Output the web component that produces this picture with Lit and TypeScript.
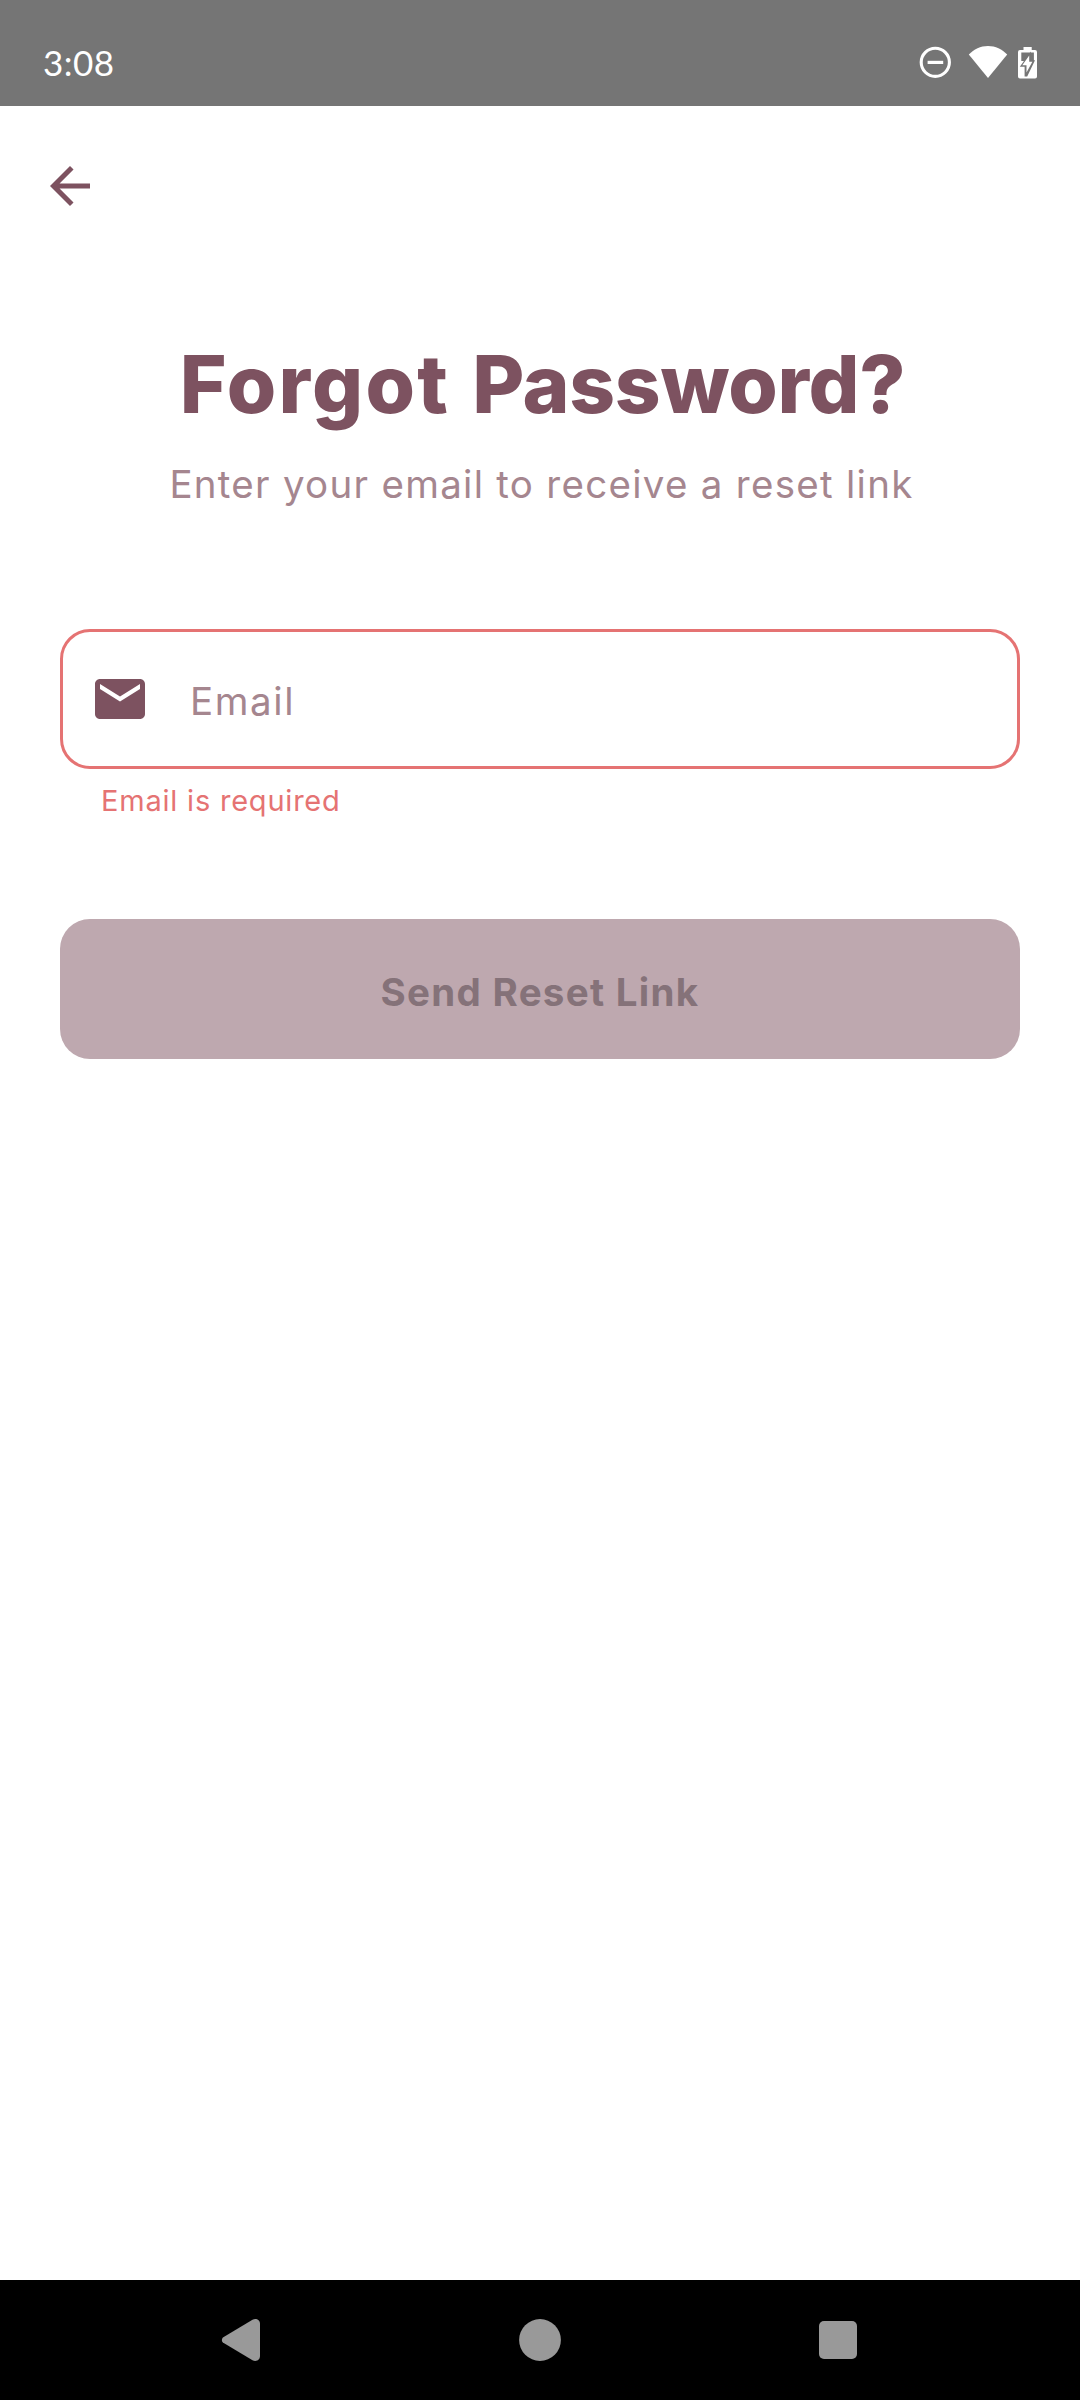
import { LitElement, html, css } from "lit";
import { customElement, property } from "lit/decorators.js";

@customElement("status-bar")
class StatusBar extends LitElement {
  @property() time = "";

  static styles = css`
    :host {
      display: flex;
      box-sizing: border-box;
      height: 106px;
      padding: 41px 40px 0 43px;
      justify-content: space-between;
      background: #757575;
      color: #fff;
    }
    .time {
      font: 400 35px/42px Lato, "Open Sans", sans-serif;
      letter-spacing: 0.5px;
    }
    .icons {
      display: flex;
      height: 42px;
    }
    svg {
      display: block;
    }
  `;

  render() {
    return html`
      <span class="time">${this.time}</span>
      <div class="icons">
        <svg width="126" height="42" viewBox="914 41 126 42">
          <circle cx="935.3" cy="62.3" r="14.1" fill="none" stroke="#fff" stroke-width="3.1" />
          <rect x="927.6" y="60.8" width="15.6" height="3.2" fill="#fff" />
          <path d="M968.8 54.6C973.9 49 980.5 45.9 988 45.9S1002.1 49 1007.2 54.6L988 78Z" fill="#fff" />
          <path d="M1023.5 47h8.2v3h3.3a2 2 0 0 1 2 2v24.6a2 2 0 0 1-2 2h-15a2 2 0 0 1-2-2V52a2 2 0 0 1 2-2h3.5z" fill="#fff" />
          <path d="M1021.3 52.5h12.6v8.5h-12.6z" fill="#757575" />
          <path d="M1030.8 51.5L1019.8 66.8h4.8v9.7h2.6L1035 60.2h-4.2z" fill="#757575" />
          <path d="M1029.2 55.5L1022.3 65.2h4.2v7.3L1032.4 61.8h-3.2z" fill="#fff" />
        </svg>
      </div>
    `;
  }
}

@customElement("navigation-bar")
class NavigationBar extends LitElement {
  static styles = css`
    :host {
      display: flex;
      height: 120px;
      padding: 0 93px;
      background: #000;
    }
    .key {
      flex: 1;
      display: flex;
      align-items: center;
      justify-content: center;
    }
    svg {
      display: block;
      fill: #999;
    }
  `;

  render() {
    return html`
      <div class="key">
        <svg width="42" height="42" viewBox="0 0 42 42">
          <path d="M1.9 18.4L31.5 .8C35 -1 39 .8 39 5V37C39 41.2 35 43 31.5 41.2L1.9 23.6C.5 22.4 .5 19.6 1.9 18.4Z" />
        </svg>
      </div>
      <div class="key">
        <svg width="42" height="42" viewBox="0 0 42 42"><circle cx="21" cy="21" r="20.9" /></svg>
      </div>
      <div class="key">
        <svg width="38" height="38" viewBox="0 0 38 38"><rect width="38" height="38" rx="5" /></svg>
      </div>
    `;
  }
}

@customElement("app-root")
class AppRoot extends LitElement {
  static styles = css`
    :host {
      display: flex;
      flex-direction: column;
      height: 2400px;
      background: #fff;
      font-family: Inter, "Open Sans", sans-serif;
      color: #7d5260;
    }
    svg {
      display: block;
      flex: none;
      fill: #7d5260;
    }
    .toolbar {
      padding: 50px 40px 0;
    }
    main {
      flex: 1;
      display: flex;
      flex-direction: column;
      padding: 118px 60px 0;
    }
    h1 {
      margin: 0;
      padding-left: 5px;
      text-align: center;
      font-size: 80px;
      line-height: 100px;
      font-weight: 800;
      letter-spacing: -0.3px;
      word-spacing: 5px;
    }
    .lead {
      letter-spacing: 2.2px;
    }
    .subtitle {
      margin: 25px 0 0;
      padding-left: 3px;
      text-align: center;
      font-size: 38.5px;
      line-height: 50px;
      letter-spacing: 1.28px;
      color: #a5868f;
    }
    .field {
      display: flex;
      align-items: center;
      box-sizing: border-box;
      height: 140px;
      margin-top: 120px;
      padding-left: 27px;
      border: 3px solid #e57373;
      border-radius: 30px;
    }
    .label {
      margin-left: 40px;
      padding-top: 3px;
      font-size: 38.5px;
      line-height: 50px;
      letter-spacing: 1.6px;
      color: #a5868f;
    }
    .error {
      margin: 14px 0 0;
      padding-left: 41px;
      font-size: 29px;
      line-height: 36px;
      letter-spacing: 0.79px;
      color: #e57373;
    }
    button {
      height: 140px;
      margin: 100px 0 0;
      padding: 5px 0 0;
      border: 0;
      border-radius: 30px;
      background: #bea8af;
      color: #857279;
      font-family: inherit;
      font-size: 38.5px;
      line-height: 50px;
      font-weight: 700;
      letter-spacing: 1.3px;
    }
  `;

  render() {
    return html`
      <status-bar time="3:08"></status-bar>
      <div class="toolbar">
        <svg width="60" height="60" viewBox="0 0 24 24">
          <path d="M20 11H7.83l5.59-5.59L12 4l-8 8 8 8 1.41-1.41L7.83 13H20v-2z" />
        </svg>
      </div>
      <main>
        <h1><span class="lead">Forgot</span> Password?</h1>
        <p class="subtitle">Enter your email to receive a reset link</p>
        <div class="field">
          <svg width="60" height="60" viewBox="0 0 24 24">
            <path d="M20 4H4c-1.1 0-2 .9-2 2v12c0 1.1.9 2 2 2h16c1.1 0 2-.9 2-2V6c0-1.1-.9-2-2-2zm0 4l-8 5-8-5V6l8 5 8-5v2z" />
          </svg>
          <span class="label">Email</span>
        </div>
        <p class="error">Email is required</p>
        <button disabled>Send Reset Link</button>
      </main>
      <navigation-bar></navigation-bar>
    `;
  }
}
